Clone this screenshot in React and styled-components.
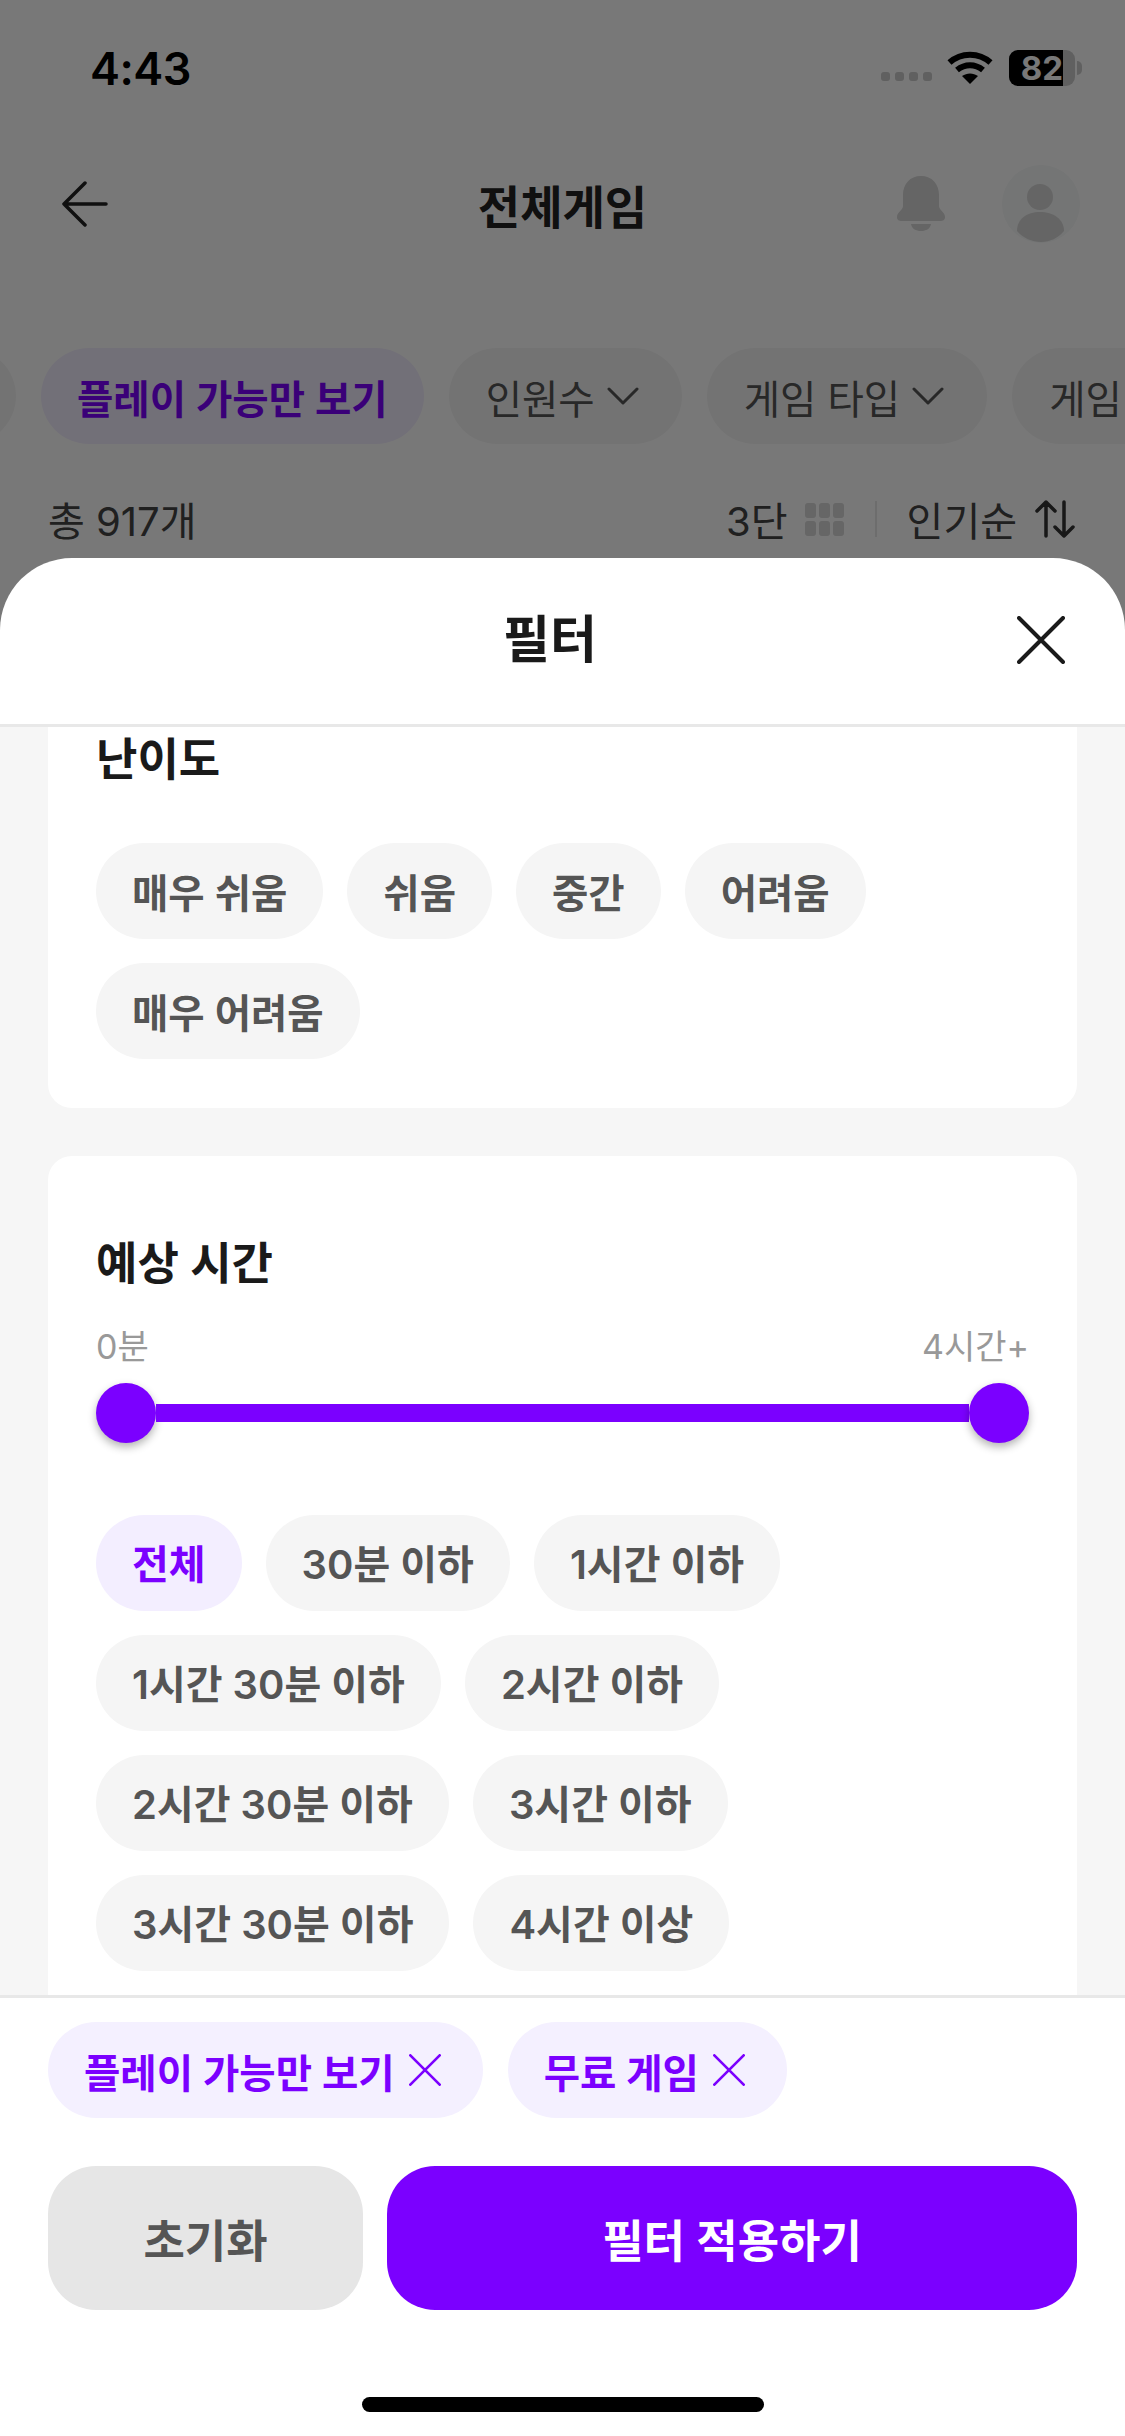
import React from "react";
import styled, { createGlobalStyle } from "styled-components";

const PURPLE = "#7b00ff";
const FONT = `Inter, "Noto Sans CJK KR", sans-serif`;

const GlobalStyle = createGlobalStyle`
  html, body {
    margin: 0;
    padding: 0;
    background: #fff;
  }
  * {
    box-sizing: border-box;
  }
`;

const Screen = styled.div`
  position: relative;
  width: 1125px;
  height: 2436px;
  overflow: hidden;
  background: #fff;
  font-family: ${FONT};
`;

/* page behind the sheet */
const StatusBar = styled.div`
  height: 136px;
  padding: 0 43px 0 90px;
  display: flex;
  align-items: center;
  justify-content: space-between;
`;

const Clock = styled.div`
  font-size: 45px;
  font-weight: 600;
  letter-spacing: -0.5px;
  color: #000;
`;

const StatusIcons = styled.div`
  display: flex;
  align-items: center;
`;

const Dots = styled.div`
  display: flex;
  gap: 5px;
  margin: 16px 15px 0 0;
`;

const Dot = styled.span`
  width: 9px;
  height: 9px;
  border-radius: 3px;
  background: #ccc;
`;

const Battery = styled.div`
  position: relative;
  width: 66px;
  height: 36px;
  margin-left: 16px;
  border-radius: 9px;
  overflow: hidden;
  background: #ccc;
  display: flex;
`;

const BatteryFill = styled.div`
  width: 54px;
  background: #000;
  color: #fff;
  font-size: 33px;
  font-weight: 700;
  line-height: 36px;
  text-align: right;
`;

const BatteryNub = styled.span`
  width: 5px;
  height: 14px;
  margin-left: 2px;
  border-radius: 0 5px 5px 0;
  background: #ccc;
`;

const TopBar = styled.div`
  height: 136px;
  padding: 0 45px 0 62px;
  display: flex;
  align-items: center;
  position: relative;
`;

const TopTitle = styled.div`
  position: absolute;
  left: 0;
  right: 0;
  text-align: center;
  font-size: 46px;
  font-weight: 700;
  color: #222;
`;

const TopActions = styled.div`
  margin-left: auto;
  display: flex;
  align-items: center;
  gap: 57px;
`;

const PageChips = styled.div`
  margin-top: 76px;
  display: flex;
  gap: 25px;
  overflow: hidden;
  margin-left: -84px;
  width: 1300px;
`;

const PageChip = styled.div`
  flex: 0 0 auto;
  height: 96px;
  padding: 0 ${(p) => (p.$active ? "36px" : "43px 0 37px")};
  border-radius: 48px;
  display: flex;
  align-items: center;
  gap: 12px;
  font-size: 39.5px;
  font-weight: ${(p) => (p.$active ? 600 : 400)};
  color: ${(p) => (p.$active ? PURPLE : "#555")};
  background: ${(p) => (p.$active ? "#f3eeff" : "#f5f5f5")};
  min-width: ${(p) => p.$min || 0}px;
`;

const ListBar = styled.div`
  margin-top: 46px;
  padding: 0 50px 0 48px;
  display: flex;
  align-items: center;
  font-size: 40px;
  color: #444;
`;

const ListTools = styled.div`
  margin-left: auto;
  display: flex;
  align-items: center;
`;

const GridIcon = styled.div`
  display: grid;
  grid-template-columns: repeat(3, 11px);
  grid-auto-rows: 15px;
  gap: 3px 3px;
  margin-left: 17px;
`;

const GridCell = styled.span`
  border-radius: 3px;
  background: #d8d8d8;
`;

const Divider = styled.span`
  width: 2px;
  height: 36px;
  margin: 0 30px 0 31px;
  background: #e8e8e8;
`;

const Dim = styled.div`
  position: absolute;
  inset: 0;
  background: rgba(0, 0, 0, 0.53);
`;

/* bottom sheet */
const Sheet = styled.div`
  position: absolute;
  left: 0;
  right: 0;
  top: 558px;
  bottom: 0;
  display: flex;
  flex-direction: column;
  background: #fff;
  border-radius: 72px 72px 0 0;
  overflow: hidden;
`;

const SheetHeader = styled.div`
  flex: 0 0 169px;
  padding: 0 60px 0 0;
  border-bottom: 3px solid #e8e8e8;
  display: flex;
  align-items: flex-start;
  justify-content: space-between;
`;

const SheetTitle = styled.div`
  margin: 50px 0 0 503px;
  font-size: 51px;
  line-height: 64px;
  font-weight: 700;
  color: #1a1a1a;
`;

const CloseIcon = styled.div`
  margin-top: 58px;
`;

const Body = styled.div`
  flex: 0 0 1268px;
  overflow: hidden;
  background: #f6f6f6;
  padding: 0 48px;
`;

const Scrolled = styled.div`
  margin-top: -75px;
  display: flex;
  flex-direction: column;
  gap: 48px;
`;

const Card = styled.section`
  background: #fff;
  border-radius: 24px;
  padding: 78px 48px 49px;
`;

const CardTitle = styled.h2`
  margin: 0 0 ${(p) => p.$gap}px;
  font-size: 45px;
  line-height: 60px;
  font-weight: 600;
  color: #1a1a1a;
`;

const Chips = styled.div`
  display: flex;
  flex-wrap: wrap;
  gap: 24px;
  margin-top: ${(p) => p.$top || 0}px;
`;

const Chip = styled.div`
  height: 96px;
  padding: 0 36px 2px;
  border-radius: 48px;
  display: flex;
  align-items: center;
  font-size: ${(p) => p.$size || 40}px;
  font-weight: ${(p) => (p.$active ? 700 : 600)};
  color: ${(p) => (p.$active ? PURPLE : "#555")};
  background: ${(p) => (p.$active ? "#f3eeff" : "#f5f5f5")};
`;

const RangeLabels = styled.div`
  display: flex;
  justify-content: space-between;
  font-size: 34px;
  line-height: 40px;
  color: #999;
`;

const Slider = styled.div`
  margin-top: 16px;
  display: flex;
  align-items: center;
`;

const Knob = styled.span`
  flex: 0 0 60px;
  height: 60px;
  border-radius: 50%;
  background: ${PURPLE};
  box-shadow: 0 4px 8px rgba(0, 0, 0, 0.3);
`;

const Track = styled.span`
  flex: 1;
  height: 18px;
  background: ${PURPLE};
`;

const Footer = styled.div`
  flex: 1;
  border-top: 3px solid #e8e8e8;
  padding: 24px 48px 0;
  position: relative;
`;

const Tags = styled.div`
  display: flex;
  gap: 25px;
`;

const Tag = styled.div`
  height: 96px;
  padding: 0 42px 0 36px;
  border-radius: 48px;
  display: flex;
  align-items: center;
  gap: 14px;
  font-size: 39.5px;
  font-weight: 600;
  color: ${PURPLE};
  background: #f4f0ff;
`;

const Actions = styled.div`
  margin-top: 48px;
  display: flex;
  gap: 24px;
`;

const Button = styled.div`
  flex: ${(p) => (p.$primary ? 1 : "0 0 315px")};
  height: 144px;
  border-radius: 48px;
  display: flex;
  align-items: center;
  justify-content: center;
  font-size: 45px;
  font-weight: 600;
  color: ${(p) => (p.$primary ? "#fff" : "#555")};
  background: ${(p) => (p.$primary ? PURPLE : "#e6e6e6")};
`;

const HomeBar = styled.div`
  position: absolute;
  left: 362px;
  bottom: 24px;
  width: 402px;
  height: 15px;
  border-radius: 8px;
  background: #000;
`;

const Cross = ({ size, color, width }) => (
  <svg width={size} height={size} viewBox="0 0 48 48" fill="none" stroke={color} strokeWidth={width} strokeLinecap="round">
    <path d="M2 2 46 46M46 2 2 46" />
  </svg>
);

const Chevron = () => (
  <svg width="32" height="20" viewBox="0 0 32 20" fill="none" stroke="#555" strokeWidth="3" strokeLinecap="round" strokeLinejoin="round">
    <path d="M2 3 16 17 30 3" />
  </svg>
);

const difficulty = ["매우 쉬움", "쉬움", "중간", "어려움", "매우 어려움"];
const times = [
  "전체",
  "30분 이하",
  "1시간 이하",
  "1시간 30분 이하",
  "2시간 이하",
  "2시간 30분 이하",
  "3시간 이하",
  "3시간 30분 이하",
  "4시간 이상",
];

export default function App() {
  return (
    <Screen>
      <GlobalStyle />
      <StatusBar>
        <Clock>4:43</Clock>
        <StatusIcons>
          <Dots>
            <Dot />
            <Dot />
            <Dot />
            <Dot />
          </Dots>
          <svg width="46" height="34" viewBox="0 0 46 34" fill="none" stroke="#000" strokeWidth="6">
            <path d="M2.5 11.5C14 1 32 1 43.5 11.5" />
            <path d="M10 19C18 12.5 28 12.5 36 19" />
            <path d="M23 33 15 25C20 21.5 26 21.5 31 25Z" fill="#000" stroke="none" />
          </svg>
          <Battery>
            <BatteryFill>82</BatteryFill>
          </Battery>
          <BatteryNub />
        </StatusIcons>
      </StatusBar>

      <TopBar>
        <svg width="46" height="46" viewBox="0 0 46 46" fill="none" stroke="#222" strokeWidth="3.5" strokeLinecap="round" strokeLinejoin="round">
          <path d="M23 2 2 23 23 44M2 23H44" />
        </svg>
        <TopTitle>전체게임</TopTitle>
        <TopActions>
          <svg width="48" height="56" viewBox="0 0 48 56" fill="#d6d6d6">
            <path d="M24 0C13 0 6 8 6 19V30C6 34 0 36 0 41 0 44 2 45 5 45H43C46 45 48 44 48 41 48 36 42 34 42 30V19C42 8 35 0 24 0Z" />
            <path d="M14 48H34C33 53 29 55 24 55 19 55 15 53 14 48Z" />
          </svg>
          <svg width="78" height="78" viewBox="0 0 78 78">
            <circle cx="39" cy="39" r="39" fill="#f6f8f8" />
            <circle cx="38" cy="32" r="13" fill="#d6d6d6" />
            <path d="M15 66C15 54 25 47 38 47 51 47 62 54 62 66 56 73 48 77 39 77 30 77 21 73 15 66Z" fill="#d6d6d6" />
          </svg>
        </TopActions>
      </TopBar>

      <PageChips>
        <PageChip $min={100} />
        <PageChip $active>플레이 가능만 보기</PageChip>
        <PageChip>
          인원수 <Chevron />
        </PageChip>
        <PageChip>
          게임 타입 <Chevron />
        </PageChip>
        <PageChip $min={200}>게임</PageChip>
      </PageChips>

      <ListBar>
        총 917개
        <ListTools>
          3단
          <GridIcon>
            {Array.from({ length: 6 }).map((_, i) => (
              <GridCell key={i} />
            ))}
          </GridIcon>
          <Divider />
          인기순
          <svg width="40" height="38" viewBox="0 0 40 38" fill="none" stroke="#333" strokeWidth="3.5" strokeLinecap="round" strokeLinejoin="round" style={{ marginLeft: 18 }}>
            <path d="M11 36V2M2 11 11 2 20 11M29 2V36M20 27 29 36 38 27" />
          </svg>
        </ListTools>
      </ListBar>

      <Dim />

      <Sheet>
        <SheetHeader>
          <SheetTitle>필터</SheetTitle>
          <CloseIcon>
            <Cross size={48} color="#1a1a1a" width={4} />
          </CloseIcon>
        </SheetHeader>

        <Body>
          <Scrolled>
            <Card>
              <CardTitle $gap={53}>난이도</CardTitle>
              <Chips>
                {difficulty.map((d) => (
                  <Chip key={d} $size={39.5}>
                    {d}
                  </Chip>
                ))}
              </Chips>
            </Card>
            <Card>
              <CardTitle $gap={33}>예상 시간</CardTitle>
              <RangeLabels>
                <span>0분</span>
                <span>4시간+</span>
              </RangeLabels>
              <Slider>
                <Knob />
                <Track />
                <Knob />
              </Slider>
              <Chips $top={72}>
                {times.map((t, i) => (
                  <Chip key={t} $active={i === 0}>
                    {t}
                  </Chip>
                ))}
              </Chips>
            </Card>
          </Scrolled>
        </Body>

        <Footer>
          <Tags>
            <Tag>
              플레이 가능만 보기 <Cross size={32} color={PURPLE} width={4} />
            </Tag>
            <Tag>
              무료 게임 <Cross size={32} color={PURPLE} width={4} />
            </Tag>
          </Tags>
          <Actions>
            <Button>초기화</Button>
            <Button $primary>필터 적용하기</Button>
          </Actions>
          <HomeBar />
        </Footer>
      </Sheet>
    </Screen>
  );
}
